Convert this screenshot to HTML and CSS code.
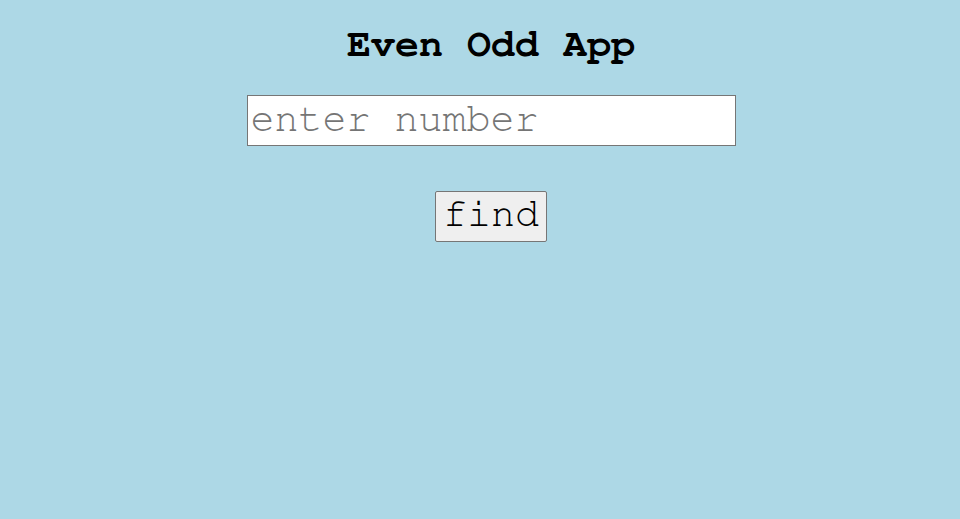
FILE: index.html
```html
<!DOCTYPE html>
<html>
<head>
<meta charset="utf-8">
<link rel="stylesheet" href="styles.css">
</head>
<body>
<div class="app">
  <h1 class="title">Even Odd App</h1>
  <input class="num" type="text" placeholder="enter number">
  <button class="find">find</button>
</div>
</body>
</html>
```
FILE: styles.css
```css
html, body {
  margin: 0;
  padding: 0;
  background: #add8e6;
  height: 100%;
}
.app {
  display: flex;
  flex-direction: column;
  align-items: center;
  padding-left: 22px;
  font-family: "Nimbus Mono PS", "FreeMono", "Courier New", "Liberation Mono", monospace;
}
.title {
  margin: 22px 0 0;
  font-size: 40px;
  line-height: 45px;
  font-weight: bold;
  color: #000;
}
.num {
  margin-top: 28px;
  box-sizing: border-box;
  width: 489px;
  height: 51px;
  padding: 0 3px 4px;
  font-family: "Nimbus Mono PS", "FreeMono", "Courier New", "Liberation Mono", monospace;
  font-size: 40px;
  line-height: 45px;
  border: 1px solid #767676;
  background: #fff;
  color: #000;
  outline: none;
}
.num::placeholder {
  color: #757575;
}
.find {
  margin-top: 45px;
  box-sizing: border-box;
  width: 112px;
  height: 51px;
  padding: 0 6px 4px;
  font-family: "Nimbus Mono PS", "FreeMono", "Courier New", "Liberation Mono", monospace;
  font-size: 40px;
  line-height: 45px;
  color: #000;
  background: #efefef;
  border: 1px solid #767676;
  border-radius: 2px;
}
```
